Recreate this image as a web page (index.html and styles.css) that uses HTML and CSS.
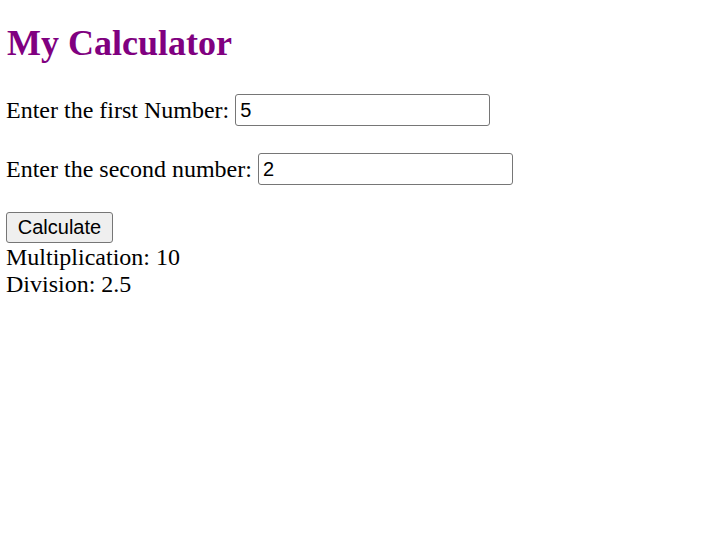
FILE: index.html
```html
<!DOCTYPE html>
<html>
<head>
<meta charset="utf-8">
<title>My Calculator</title>
<link rel="stylesheet" href="styles.css">
</head>
<body>
<h1 class="title">My Calculator</h1>
<p class="row">Enter the first Number: <input class="field" type="text" value="5"></p>
<p class="row">Enter the second number: <input class="field" type="text" value="2"></p>
<button class="btn">Calculate</button>
<div class="results">Multiplication: 10<br>Division: 2.5</div>
</body>
</html>
```
FILE: styles.css
```css
html, body {
  background: #ffffff;
}
body {
  margin: 0;
  padding: 0 6px;
  font-family: "Liberation Serif", "Times New Roman", serif;
  font-size: 24px;
  color: #000;
}
.title {
  font-size: 36px;
  font-weight: bold;
  color: #800080;
  margin: 22px 0 0 1px;
  line-height: 42px;
}
.row {
  margin: 30px 0 0 0;
  line-height: 27px;
}
.row + .row {
  margin-top: 27px;
}
.field {
  font-family: "Liberation Sans", Arial, sans-serif;
  font-size: 20px;
  width: 255px;
  height: 32px;
  box-sizing: border-box;
  border: 1px solid #767676;
  border-radius: 3px;
  padding: 1px 4px;
  vertical-align: 1px;
  margin: 0;
}
.btn {
  display: block;
  margin-top: 27px;
  font-family: "Liberation Sans", Arial, sans-serif;
  font-size: 20px;
  width: 107px;
  height: 31px;
  background: #efefef;
  border: 1px solid #767676;
  border-radius: 3px;
  padding: 0;
  color: #000;
}
.results {
  margin-top: 1px;
  line-height: 27px;
}
```
